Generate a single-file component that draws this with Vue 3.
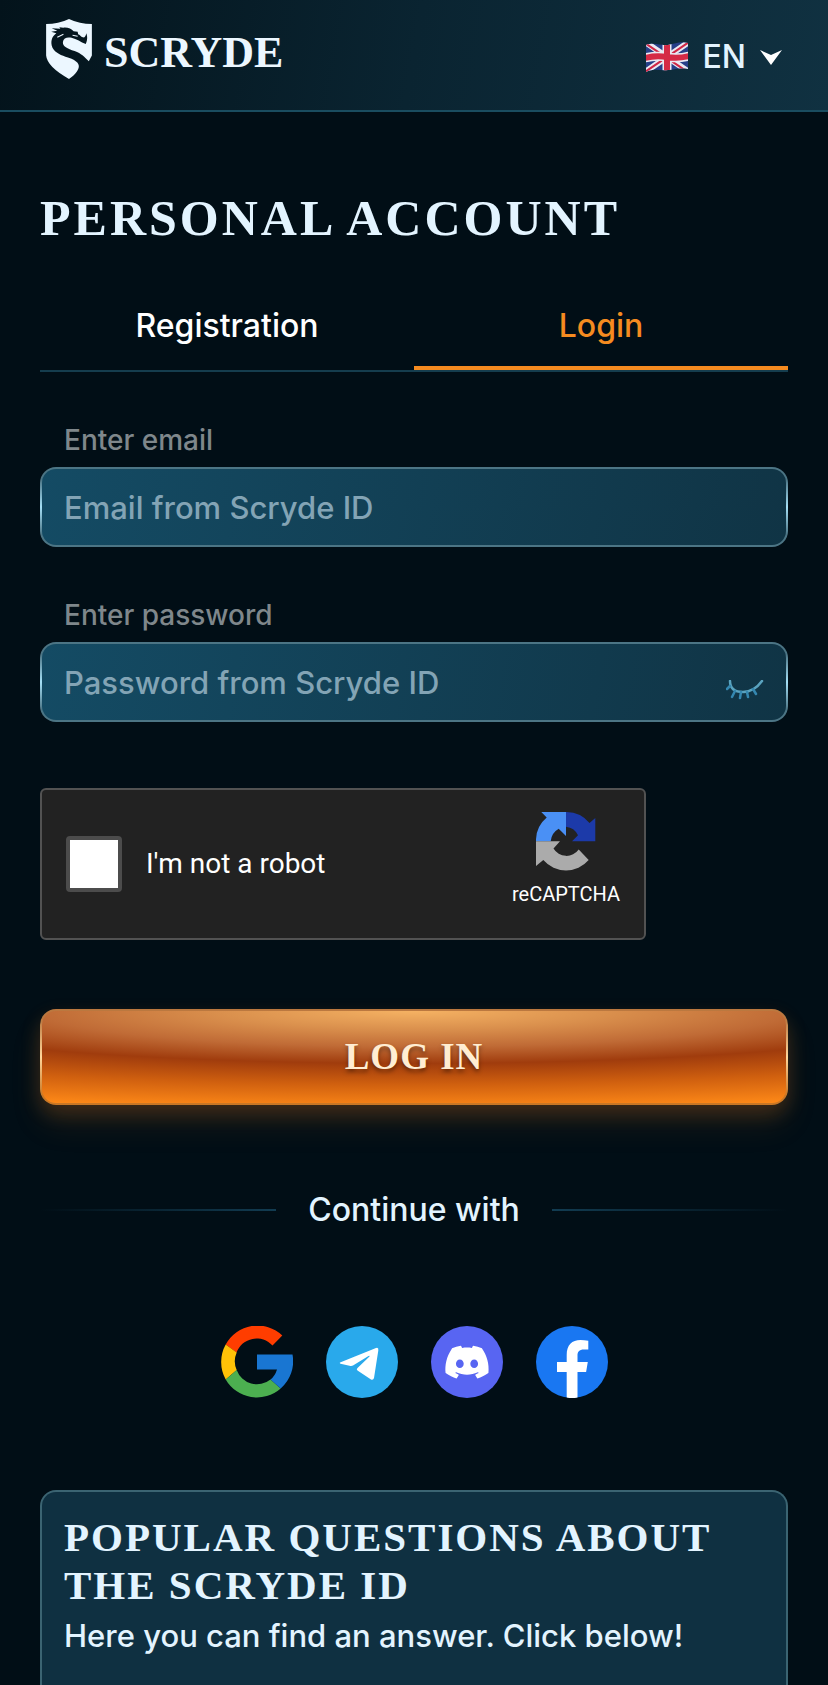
<script setup>
import { ref } from 'vue';

let tab = ref("login")
let email = ref("")
let password = ref("")
let showPassword = ref(false)
let robot = ref(false)

</script>

<template>
    <div class="page">
        <header class="header">
            <a href="#" class="logo">
                <svg width="46" height="60" viewBox="0 0 45 59" aria-hidden="true">
                    <path fill="#ecf7ff" d="M0 5Q12 5 22.500 0Q33 5 45 5V36L42 41.500C37 37 35 34 28 31.500C21 29 16 27 16.500 22.500C17 18.500 21 17.500 25 18.500C30 19.500 34 23 39 24.500C41 20 40.500 17 39.500 14C39 17 38 18.500 36 18C34 17.500 34 16 31.500 15L31 12.500L27 12C25 9.500 21 8 17 8.500L13 8L14 9.500L5.500 9L11 11.500L5 12.500L10 14C6 17 4.500 21 5.500 26C7 32 13 35 19 37C28 39.500 33.500 43 32 48C31 52 27 56 22.500 59Q1 47 0 36Z" />
                    <path stroke="#ecf7ff" stroke-width="1" fill="none" d="M11 18l6-3M26 16l5 1" />
                </svg>
                <span>SCRYDE</span>
            </a>
            <button class="lang" type="button">
                <svg class="flag" width="44" height="31" viewBox="0 0 44 31" aria-hidden="true">
                    <defs>
                        <clipPath id="flagShape">
                            <path d="M1 3C10 0 15 4 23 3C31 1 36 -1 43 1V27C35 25 31 28 23 28C15 29 10 26 1 30Z" />
                        </clipPath>
                    </defs>
                    <g clip-path="url(#flagShape)">
                        <rect width="44" height="31" fill="#263f88" />
                        <path d="M0 0L44 30M44 0L0 30" stroke="#e9e9f2" stroke-width="6" />
                        <path d="M0 1L44 31M44 0L0 30" stroke="#cf2746" stroke-width="2" />
                        <path d="M22 0V31M0 16Q11 13 22 15T44 14" stroke="#e9e9f2" stroke-width="9" fill="none" />
                        <path d="M22 0V31M0 16Q11 13 22 15T44 14" stroke="#d52a46" stroke-width="6" fill="none" />
                    </g>
                </svg>
                <span>EN</span>
                <svg width="22" height="15" viewBox="0 0 22 15" aria-hidden="true">
                    <path d="M0 0L11 5L22 0L11 15Z" fill="#fff" />
                </svg>
            </button>
        </header>

        <main class="main">
            <h1>PERSONAL ACCOUNT</h1>

            <div class="tabs">
                <button type="button" :class="{ active: tab === 'registration' }" @click="tab = 'registration'">Registration</button>
                <button type="button" :class="{ active: tab === 'login' }" @click="tab = 'login'">Login</button>
            </div>

            <form @submit.prevent>
                <div class="field">
                    <label for="email">Enter email</label>
                    <input v-model="email" type="email" id="email" placeholder="Email from Scryde ID">
                </div>

                <div class="field">
                    <label for="password">Enter password</label>
                    <div class="passwordBox">
                        <input v-model="password" :type="showPassword ? 'text' : 'password'" id="password" placeholder="Password from Scryde ID">
                        <button type="button" class="eye" aria-label="Show password" @click="showPassword = !showPassword">
                            <svg width="38" height="20" viewBox="0 0 38 20" fill="none" stroke-width="2.500" stroke-linecap="round">
                                <path stroke="#5aa3bf" d="M4 1Q4 12 17 12Q28 12 36 1" />
                                <path stroke="#3487b0" d="M4 6L1 9M9 11L6 17M15 12L14 18M21 12L22 17M27 9L30 14" />
                            </svg>
                        </button>
                    </div>
                </div>

                <div class="captcha">
                    <input v-model="robot" type="checkbox" id="robot">
                    <label for="robot">I'm not a robot</label>
                    <div class="captchaLogo">
                        <svg width="60" height="60" viewBox="0 0 60 60" aria-hidden="true">
                            <path fill="#4a90f5" d="M0 29.300A30 30 0 0 1 10.700 5.500L5.300 0H30V24L22.700 16.700A16 16 0 0 0 14.700 29.300Z" />
                            <path fill="#1c3aa9" d="M30 0A30 30 0 0 1 53.500 11L59.300 6V29.300H36L42 23.300A15 15 0 0 0 30 14.700Z" />
                            <path fill="#ababab" d="M0 29.300H24L17.500 36.500A15 15 0 0 0 42.700 37.500L52.700 48A30 30 0 0 1 7.300 48L0 54Z" />
                        </svg>
                        <span>reCAPTCHA</span>
                    </div>
                </div>

                <button type="submit" class="loginButton">LOG IN</button>
            </form>

            <div class="divider">Continue with</div>

            <div class="socials">
                <a href="#" aria-label="Google">
                    <svg viewBox="-36 -36 72 72">
                        <path fill="#ff3d00" d="M-31.300-17.500A36 36 0 0 1 25.300-26.500L15.500-16.500A21.500 21.500 0 0 0-20.500-9.500Z" />
                        <path fill="#ffc107" d="M-31.300-17.500A36 36 0 0 0-31.300 17.500L-20.300 8A21.500 21.500 0 0 1-20.300-9.500Z" />
                        <path fill="#4caf50" d="M-31.300 17.500A36 36 0 0 0 23.700 26.500L13.500 17.500A21.500 21.500 0 0 1-20.300 8Z" />
                        <path fill="#1976d2" d="M0-7.500H35.500A36 36 0 0 1 23.700 26.500L13.500 17.500Q18 14 20 7.500H0Z" />
                    </svg>
                </a>
                <a href="#" aria-label="Telegram">
                    <svg viewBox="0 0 72 72">
                        <circle cx="36" cy="36" r="36" fill="#29a9eb" />
                        <path fill="#fff" d="M14 36.500L50 22Q52.800 21 52.300 24.500L48 52Q47.300 54.500 45 53.500L31.500 44.500Q30 43.300 31.500 42L43.500 30.500Q44 29.300 42.500 30L27 39.500Q25.500 40.300 23.500 39.700L14.500 37.800Q13.200 37 14 36.500Z" />
                    </svg>
                </a>
                <a href="#" aria-label="Discord">
                    <svg viewBox="0 0 72 72">
                        <circle cx="36" cy="36" r="36" fill="#5865f2" />
                        <path fill="#fff" transform="translate(14.400 14.500) scale(1.800)" d="M20.317 4.3698a19.7913 19.7913 0 00-4.8851-1.5152.0741.0741 0 00-.0785.0371c-.211.3753-.4447.8648-.6083 1.2495-1.8447-.2762-3.68-.2762-5.4868 0-.1636-.3933-.4058-.8742-.6177-1.2495a.077.077 0 00-.0785-.037 19.7363 19.7363 0 00-4.8852 1.515.0699.0699 0 00-.0321.0277C.5334 9.0458-.319 13.5799.0992 18.0578a.0824.0824 0 00.0312.0561c2.0528 1.5076 4.0413 2.4228 5.9929 3.0294a.0777.0777 0 00.0842-.0276c.4616-.6304.8731-1.2952 1.226-1.9942a.076.076 0 00-.0416-.1057c-.6528-.2476-1.2743-.5495-1.8722-.8923a.077.077 0 01-.0076-.1277c.1258-.0943.2517-.1923.3718-.2914a.0743.0743 0 01.0776-.0105c3.9278 1.7933 8.18 1.7933 12.0614 0a.0739.0739 0 01.0785.0095c.1202.099.246.1981.3728.2924a.077.077 0 01-.0066.1276 12.2986 12.2986 0 01-1.873.8914.0766.0766 0 00-.0407.1067c.3604.698.7719 1.3628 1.225 1.9932a.076.076 0 00.0842.0286c1.961-.6067 3.9495-1.5219 6.0023-3.0294a.077.077 0 00.0313-.0552c.5004-5.177-.8382-9.6739-3.5485-13.6604a.061.061 0 00-.0312-.0286zM8.02 15.3312c-1.1825 0-2.1569-1.0857-2.1569-2.419 0-1.3332.9555-2.4189 2.157-2.4189 1.2108 0 2.1757 1.0952 2.1568 2.419 0 1.3332-.9555 2.4189-2.1569 2.4189zm7.9748 0c-1.1825 0-2.1569-1.0857-2.1569-2.419 0-1.3332.9554-2.4189 2.1569-2.4189 1.2108 0 2.1757 1.0952 2.1568 2.419 0 1.3332-.946 2.4189-2.1568 2.4189Z" />
                    </svg>
                </a>
                <a href="#" aria-label="Facebook">
                    <svg viewBox="0 0 72 72">
                        <circle cx="36" cy="36" r="36" fill="#1977f2" />
                        <path fill="#fff" d="M30.700 71.500V46H21V36H30.700V29C30.700 19 36 14 44.500 14Q48 14 52.300 14.700V23.500H48C43 23.500 41.500 26 41.500 29.500V36H51.800L50.100 46H41.500V71.500Q36 72.500 30.700 71.500Z" />
                    </svg>
                </a>
            </div>

            <section class="faq">
                <h2>POPULAR QUESTIONS ABOUT THE SCRYDE ID</h2>
                <p>Here you can find an answer. Click below!</p>
            </section>
        </main>
    </div>
</template>

<style>
body {
    margin: 0;
    background-color: #010e16;
}
</style>

<style scoped>
* {
    box-sizing: border-box;
}

.page {
    display: flex;
    flex-direction: column;
    min-height: 100vh;
    font: 500 32px/40px Inter, "Liberation Sans", sans-serif;
    color: #e3f4ff;
}

button {
    padding: 0;
    border: none;
    background: none;
    font: inherit;
    color: inherit;
    cursor: pointer;
}

h1,
h2,
p {
    margin: 0;
}

svg {
    display: block;
}

.header {
    display: flex;
    align-items: center;
    justify-content: space-between;
    height: 112px;
    padding: 0 46px;
    border-bottom: 2px solid #1a4d60;
    background: linear-gradient(100deg, #03131b, #0a2431 50%, #103141);
}

.logo {
    display: flex;
    align-items: center;
    gap: 12px;
    padding-bottom: 12px;
    font: bold 44px/60px "Liberation Serif", serif;
    color: #ecf7ff;
    text-decoration: none;
}

.logo span {
    padding-top: 8px;
}

.lang {
    display: flex;
    align-items: center;
    gap: 14px;
    padding-top: 4px;
}

.main {
    display: flex;
    flex: 1;
    flex-direction: column;
    padding: 76px 40px 0;
}

h1 {
    font: bold 50px/60px "Liberation Serif", serif;
    letter-spacing: 3px;
}

.tabs {
    display: flex;
    margin-top: 40px;
    border-bottom: 2px solid #153d4e;
}

.tabs button {
    flex: 1;
    padding: 18px 0 20px;
    border-bottom: 4px solid transparent;
    color: #fff;
}

.tabs .active {
    border-color: #f58b20;
    color: #f58b20;
}

.field {
    display: flex;
    flex-direction: column;
    gap: 9px;
    margin-top: 50px;
}

.field label {
    padding-left: 24px;
    font-size: 28px;
    line-height: 36px;
    color: #7f878b;
}

.field input {
    width: 100%;
    height: 80px;
    padding: 0 22px;
    border: 2px solid transparent;
    border-radius: 16px;
    outline: none;
    /* fill first, then the border that shines at mid-height */
    background:
        linear-gradient(100deg, #144b64, #103445) padding-box,
        linear-gradient(#4c7585 15%, #a5dff5 50%, #4c7585 85%) border-box;
    font: inherit;
    font-size: 31px;
    color: #e3f4ff;
}

.field input::placeholder {
    color: #83a4b5;
    opacity: 1;
}

.passwordBox {
    position: relative;
}

.eye {
    position: absolute;
    right: 24px;
    top: 38px;
}

.captcha {
    display: flex;
    align-items: center;
    width: 606px;
    max-width: 100%;
    height: 152px;
    margin-top: 66px;
    padding: 0 24px;
    border: 2px solid #525252;
    border-radius: 6px;
    background-color: #222;
    font-family: Roboto, sans-serif;
    font-weight: 400;
    color: #fff;
}

.captcha input {
    appearance: none;
    flex: none;
    width: 56px;
    height: 56px;
    margin: 0;
    border: 4px solid #4c4c4c;
    border-radius: 4px;
    background-color: #fff;
}

.captcha input:checked {
    background-color: #4a90f5;
}

.captcha label {
    flex: 1;
    padding-left: 24px;
    font-size: 28px;
}

.captchaLogo {
    display: flex;
    flex-direction: column;
    align-items: center;
    gap: 8px;
    padding-bottom: 8px;
    font-size: 20px;
    line-height: 28px;
}

.loginButton {
    width: 100%;
    height: 96px;
    margin-top: 69px;
    border: 2px solid transparent;
    border-radius: 16px;
    background:
        radial-gradient(74% 57% at 50% 0, #f5b263, #da904d 35%, #c06b36 68%, #a03c0d 100%, #d0600f 140%, #ff8a18 188%) padding-box,
        linear-gradient(#bb783f 10%, #ffd79b 50%, #c97725 90%) border-box;
    box-shadow: 0 8px 20px #f5811f33, 0 20px 32px #f5811f1a;
    font: bold 37px/48px "Liberation Serif", serif;
    letter-spacing: 1px;
    color: #ffedd2;
    text-shadow: 0 3px 4px #00000066;
}

.divider {
    display: flex;
    align-items: center;
    gap: 32px;
    margin-top: 85px;
}

.divider::before,
.divider::after {
    content: "";
    flex: 1;
    height: 2px;
    background: linear-gradient(90deg, transparent, #123c52);
}

.divider::after {
    background: linear-gradient(90deg, #123c52, transparent);
}

.socials {
    display: flex;
    justify-content: center;
    gap: 33px;
    margin-top: 96px;
}

.socials svg {
    width: 72px;
    height: 72px;
}

.faq {
    flex: 1;
    margin-top: 92px;
    padding: 21px 22px 28px;
    border: 2px solid #3b6472;
    border-bottom: none;
    border-radius: 16px 16px 0 0;
    background-color: #0f3041;
}

h2 {
    font: bold 41px/48px "Liberation Serif", serif;
    letter-spacing: 2px;
}

.faq p {
    margin-top: 7px;
    font-size: 31px;
}
</style>
